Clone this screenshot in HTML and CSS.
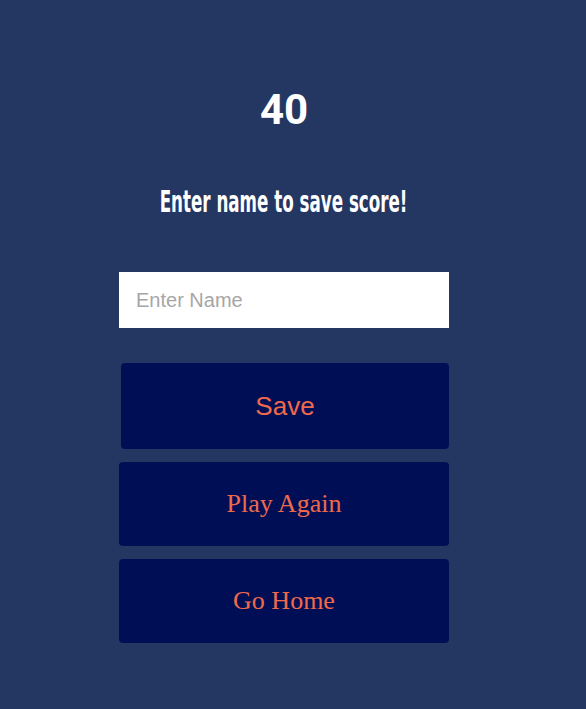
FILE: index.html
```html
<!DOCTYPE html>
<html lang="en">
<head>
<meta charset="utf-8">
<title>Score</title>
<link rel="stylesheet" href="styles.css">
</head>
<body>
<main class="end">
  <h1 class="score">40</h1>
  <h2 class="prompt"><span class="prompt-text">Enter name to save score!</span></h2>
  <form class="save-form">
    <input class="name-input" type="text" placeholder="Enter Name">
    <button class="btn btn-save" type="button">Save</button>
  </form>
  <a class="btn btn-link" href="#">Play Again</a>
  <a class="btn btn-link" href="#">Go Home</a>
</main>
</body>
</html>
```
FILE: styles.css
```css
html, body {
  margin: 0;
  padding: 0;
  background: #243662;
  height: 100%;
}
.end {
  width: 330px;
  margin: 0 0 0 119px;
  padding-top: 89px;
  display: flex;
  flex-direction: column;
  align-items: stretch;
}
.score {
  margin: 0;
  font-family: Roboto, "Liberation Sans", sans-serif;
  font-weight: 700;
  font-size: 42px;
  line-height: 42px;
  color: #ffffff;
  text-align: center;
}
.prompt {
  margin: 54px 0 0 0;
  height: 32px;
  display: flex;
  justify-content: center;
  white-space: nowrap;
  font-family: "DejaVu Sans Condensed", "DejaVu Sans", sans-serif;
  font-stretch: condensed;
  font-weight: 700;
  font-size: 31px;
  line-height: 32px;
  color: #ffffff;
}
.prompt-text {
  display: inline-block;
  transform: scaleX(0.6);
  transform-origin: center;
}
.save-form {
  margin: 55px 0 0 0;
  display: flex;
  flex-direction: column;
}
.name-input {
  box-sizing: border-box;
  width: 330px;
  height: 56px;
  border: none;
  outline: none;
  padding: 0 17px;
  font-family: "Liberation Sans", Arial, sans-serif;
  font-size: 20px;
  color: #333;
  background: #ffffff;
}
.name-input::placeholder {
  color: #a6a6a6;
}
.btn {
  box-sizing: border-box;
  display: flex;
  align-items: center;
  justify-content: center;
  background: #000f55;
  color: #f0694c;
  border-radius: 4px;
  text-decoration: none;
  font-size: 26px;
}
.btn-save {
  margin: 35px 0 0 2px;
  width: 328px;
  height: 86px;
  border: none;
  font-family: "Liberation Sans", Arial, sans-serif;
  cursor: pointer;
}
.btn-link {
  margin-top: 13px;
  height: 84px;
  font-family: "Liberation Serif", "Times New Roman", serif;
}
```
